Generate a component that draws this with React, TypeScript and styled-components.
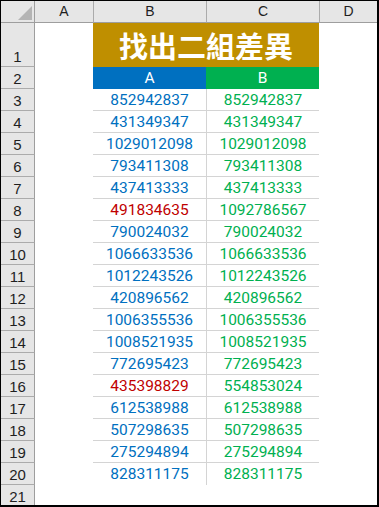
import React from "react";
import styled, { createGlobalStyle } from "styled-components";

const Global = createGlobalStyle`
  html, body { margin: 0; padding: 0; background: #ffffff; }
  * { box-sizing: border-box; }
`;

const Frame = styled.div`
  width: 379px;
  height: 507px;
  border-style: solid;
  border-color: #000000;
  border-width: 1px 2px 2px 1px;
  overflow: hidden;
  background: #ffffff;
`;

const Grid = styled.div`
  display: grid;
  grid-template-columns: 34px 58px 113px 113px 58px;
  grid-template-rows: 22px 44px;
  grid-auto-rows: 22px;
`;

const Corner = styled.div`
  background: #e6e6e6;
  border-right: 1px solid #9e9e9e;
  border-bottom: 1px solid #9e9e9e;
  display: flex;
  justify-content: flex-end;
  align-items: flex-end;
  padding: 0 2px 2px 0;
`;

const ColHead = styled.div<{ $first?: boolean }>`
  background: #e6e6e6;
  border-bottom: 1px solid #9e9e9e;
  border-left: ${(p) => (p.$first ? "none" : "1px solid #ababab")};
  color: #1f1f1f;
  font-family: "Liberation Sans", Arial, sans-serif;
  font-size: 14px;
  line-height: 21px;
  text-align: center;
`;

const RowHead = styled.div`
  background: #e6e6e6;
  border-right: 1px solid #9e9e9e;
  border-bottom: 1px solid #ababab;
  color: #1f1f1f;
  font-family: "Liberation Sans", Arial, sans-serif;
  font-size: 15px;
  line-height: 1;
  display: flex;
  justify-content: center;
  align-items: flex-end;
  padding-bottom: 2px;
`;

const Blank = styled.div`
  background: #ffffff;
`;

const Title = styled.div`
  grid-column: span 2;
  background: #bf8f00;
  color: #ffffff;
  font-family: "Noto Sans CJK TC", "Noto Sans CJK SC", sans-serif;
  font-weight: 700;
  font-size: 29px;
  display: flex;
  align-items: center;
  justify-content: center;
  letter-spacing: 0;
`;

const Head = styled.div<{ $bg: string }>`
  background: ${(p) => p.$bg};
  color: #ffffff;
  font-family: Roboto, "Liberation Sans", sans-serif;
  font-size: 15.5px;
  line-height: 22px;
  text-align: center;
`;

const Cell = styled.div<{ $color: string; $divider?: boolean; $last?: boolean }>`
  color: ${(p) => p.$color};
  font-family: Roboto, "Liberation Sans", sans-serif;
  font-size: 15.5px;
  line-height: 21px;
  padding-top: 1px;
  text-align: center;
  border-bottom: ${(p) => (p.$last ? "none" : "1px solid #d4d4d4")};
  border-left: ${(p) => (p.$divider ? "1px solid #d4d4d4" : "none")};
`;

const BLUE = "#0070c0";
const GREEN = "#00b050";
const RED = "#c00000";

const rows: [string, string][] = [
  ["852942837", "852942837"],
  ["431349347", "431349347"],
  ["1029012098", "1029012098"],
  ["793411308", "793411308"],
  ["437413333", "437413333"],
  ["491834635", "1092786567"],
  ["790024032", "790024032"],
  ["1066633536", "1066633536"],
  ["1012243526", "1012243526"],
  ["420896562", "420896562"],
  ["1006355536", "1006355536"],
  ["1008521935", "1008521935"],
  ["772695423", "772695423"],
  ["435398829", "554853024"],
  ["612538988", "612538988"],
  ["507298635", "507298635"],
  ["275294894", "275294894"],
  ["828311175", "828311175"],
];

const CornerMark = () => (
  <svg width="14" height="14" viewBox="0 0 14 14">
    <polygon points="14,0 14,14 0,14" fill="#b4b4b4" />
  </svg>
);

export default function App() {
  return (
    <>
      <Global />
      <Frame>
        <Grid>
          <Corner>
            <CornerMark />
          </Corner>
          <ColHead $first>A</ColHead>
          <ColHead>B</ColHead>
          <ColHead>C</ColHead>
          <ColHead>D</ColHead>

          <RowHead>1</RowHead>
          <Blank />
          <Title>找出二組差異</Title>
          <Blank />

          <RowHead>2</RowHead>
          <Blank />
          <Head $bg={BLUE}>A</Head>
          <Head $bg={GREEN}>B</Head>
          <Blank />

          {rows.map(([a, b], i) => {
            const diff = a !== b;
            const last = i === rows.length - 1;
            return (
              <React.Fragment key={i}>
                <RowHead>{i + 3}</RowHead>
                <Blank />
                <Cell $color={diff ? RED : BLUE} $last={last}>
                  {a}
                </Cell>
                <Cell $color={GREEN} $divider $last={last}>
                  {b}
                </Cell>
                <Blank />
              </React.Fragment>
            );
          })}

          <RowHead>21</RowHead>
          <Blank />
          <Blank />
          <Blank />
          <Blank />
        </Grid>
      </Frame>
    </>
  );
}
